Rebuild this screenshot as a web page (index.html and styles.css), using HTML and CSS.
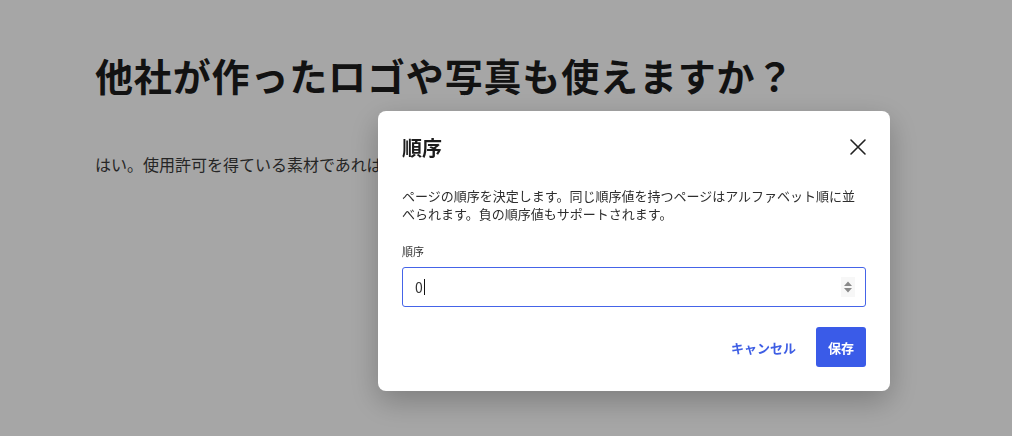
FILE: index.html
```html
<!DOCTYPE html>
<html lang="ja">
<head>
<meta charset="utf-8">
<link rel="stylesheet" href="styles.css">
</head>
<body>
<main class="page">
  <h1 class="page-title">他社が作ったロゴや写真も使えますか？</h1>
  <p class="page-text">はい。使用許可を得ている素材であれば問題なく使用できます。</p>
</main>
<div class="overlay"></div>
<div class="modal" role="dialog">
  <div class="modal-head">
    <h2 class="modal-title">順序</h2>
    <button class="close" aria-label="閉じる">
      <svg width="18" height="18" viewBox="0 0 18 18"><path d="M2 2 L16 16 M16 2 L2 16" stroke="#222" stroke-width="1.6" stroke-linecap="round" fill="none"/></svg>
    </button>
  </div>
  <p class="modal-desc">ページの順序を決定します。同じ順序値を持つページはアルファベット順に並べられます。負の順序値もサポートされます。</p>
  <label class="field-label">順序</label>
  <div class="input">
    <span class="value">0</span><span class="caret"></span>
    <span class="spin">
      <svg width="12" height="18" viewBox="0 0 12 18"><path d="M6 3.5 L10 8 L2 8 Z M2 10 L10 10 L6 14.5 Z" fill="#8a8a8a"/></svg>
    </span>
  </div>
  <div class="actions">
    <button class="btn-text">キャンセル</button>
    <button class="btn-primary">保存</button>
  </div>
</div>
</body>
</html>
```
FILE: styles.css
```css
* { box-sizing: border-box; }
html, body { margin: 0; height: 100%; }
body {
  font-family: "Noto Sans CJK JP", "Noto Sans", sans-serif;
  background: #ffffff;
  color: #1c1c1c;
  overflow: hidden;
}
.page {
  padding: 40px 95px;
}
.page-title {
  margin: 0;
  font-size: 38px;
  font-weight: 700;
  line-height: 70px;
  letter-spacing: 0.85px;
}
.page-text {
  margin: 42px 0 0;
  font-size: 16px;
  line-height: 24px;
  color: #3a3a3a;
  white-space: nowrap;
}
.overlay {
  position: fixed;
  inset: 0;
  background: rgba(0, 0, 0, 0.35);
}
.modal {
  position: fixed;
  left: 378px;
  top: 111px;
  width: 512px;
  height: 280px;
  background: #fff;
  border-radius: 8px;
  box-shadow: 0 10px 30px rgba(0, 0, 0, 0.25);
  padding: 20px 24px 24px;
}
.modal-head {
  display: flex;
  align-items: center;
  justify-content: space-between;
  height: 32px;
}
.modal-title {
  margin: 0;
  font-size: 20px;
  font-weight: 700;
  color: #1c1c1c;
}
.close {
  border: 0;
  background: none;
  padding: 0;
  width: 18px;
  height: 18px;
  margin-right: -1px;
  display: flex;
}
.modal-desc {
  margin: 24px 0 0;
  font-size: 13px;
  line-height: 18px;
  color: #2e2e2e;
}
.field-label {
  display: block;
  margin-top: 20px;
  font-size: 11px;
  line-height: 16px;
  color: #333;
}
.input {
  margin-top: 8px;
  height: 40px;
  border: 1.5px solid #4564e8;
  border-radius: 3px;
  display: flex;
  align-items: center;
  padding: 0 12px;
  font-size: 14px;
  color: #333;
}
.caret {
  width: 1px;
  height: 16px;
  background: #111;
  margin-left: 1px;
}
.spin {
  margin-left: auto;
  display: flex;
  background: #f7f7f7;
  width: 14px;
  height: 20px;
  align-items: center;
  justify-content: center;
  margin-right: -2px;
}
.actions {
  display: flex;
  justify-content: flex-end;
  align-items: center;
  gap: 20px;
  margin-top: 20px;
}
.btn-text {
  border: 0;
  background: none;
  font-family: inherit;
  font-size: 13px;
  font-weight: 700;
  color: #3e5ee4;
  padding: 0;
}
.btn-primary {
  border: 0;
  background: #3a5be8;
  color: #fff;
  font-family: inherit;
  font-size: 13px;
  font-weight: 700;
  width: 50px;
  height: 40px;
  border-radius: 3px;
}
```
